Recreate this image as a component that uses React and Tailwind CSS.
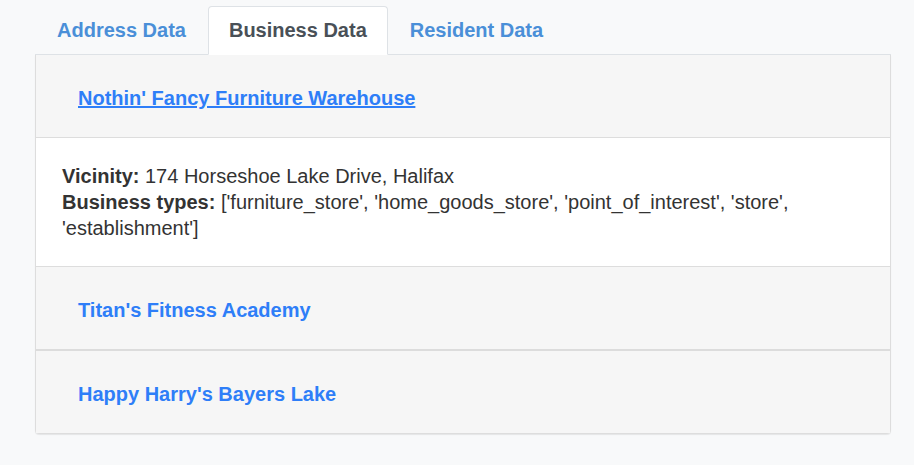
import React, { useState } from "react";

const businesses = [
  {
    name: "Nothin' Fancy Furniture Warehouse",
    vicinity: "174 Horseshoe Lake Drive, Halifax",
    types: "['furniture_store', 'home_goods_store', 'point_of_interest', 'store', 'establishment']",
  },
  { name: "Titan's Fitness Academy", vicinity: "", types: "" },
  { name: "Happy Harry's Bayers Lake", vicinity: "", types: "" },
];

const tabs = ["Address Data", "Business Data", "Resident Data"];

function App() {
  const [activeTab, setActiveTab] = useState("Business Data");
  const [openIndex, setOpenIndex] = useState(0);

  return (
    <div
      className="min-h-screen bg-[#f8f9fa] pt-[6px] pl-[35px]"
      style={{ fontFamily: '"Liberation Sans", Arial, sans-serif' }}
    >
      <div className="w-[856px]">
        {/* Tabs */}
        <div className="flex border-b border-[#dee2e6] pl-px">
          {tabs.map((tab) => (
            <button
              key={tab}
              onClick={() => setActiveTab(tab)}
              className={
                tab === activeTab
                  ? "h-[49px] px-[20px] pb-[2px] mr-px -mb-px bg-white border border-[#dee2e6] border-b-white rounded-t-[4px] text-[20px] font-bold text-[#495057]"
                  : "h-[49px] px-[20px] pb-[2px] mr-px -mb-px border border-transparent text-[20px] font-bold text-[#4a8fd8]"
              }
            >
              {tab}
            </button>
          ))}
        </div>

        {/* Accordion panels */}
        <div className="border-x border-b border-[#dddddd] rounded-b-[4px] shadow-[0_1px_1px_rgba(0,0,0,0.08)]">
          {businesses.map((biz, i) => (
            <div
              key={biz.name}
              className={
                i === 0
                  ? ""
                  : i === 1
                  ? "border-t border-[#dddddd]"
                  : "border-t-2 border-[#dcdcdc]"
              }
            >
              <div
                className="h-[82px] flex items-center bg-[#f6f6f6] pl-[42px] pt-[4px] cursor-pointer"
                onClick={() => setOpenIndex(openIndex === i ? -1 : i)}
              >
                <span
                  className={
                    openIndex === i
                      ? "text-[20px] font-bold text-[#2e7ef8] underline"
                      : "text-[20px] font-bold text-[#2e7ef8]"
                  }
                >
                  {biz.name}
                </span>
              </div>
              {openIndex === i && biz.vicinity && (
                <div className="bg-white border-t border-[#dddddd] px-[26px] py-[25px] text-[20px] leading-[26px] text-[#333333]">
                  <div>
                    <strong>Vicinity:</strong> {biz.vicinity}
                  </div>
                  <div>
                    <strong>Business types:</strong> {biz.types}
                  </div>
                </div>
              )}
            </div>
          ))}
        </div>
      </div>
    </div>
  );
}

export default App;
